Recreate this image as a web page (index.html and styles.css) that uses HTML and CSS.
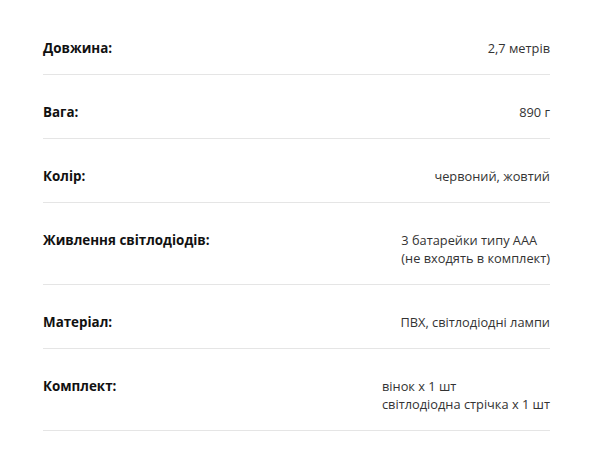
FILE: index.html
```html
<!DOCTYPE html>
<html lang="uk">
<head>
<meta charset="utf-8">
<link rel="stylesheet" href="styles.css">
</head>
<body>
<div class="specs">
  <div class="row"><div class="label">Довжина:</div><div class="value">2,7 метрів</div></div>
  <div class="row"><div class="label">Вага:</div><div class="value">890 г</div></div>
  <div class="row"><div class="label">Колір:</div><div class="value">червоний, жовтий</div></div>
  <div class="row"><div class="label">Живлення світлодіодів:</div><div class="value">3 батарейки типу ААА<br>(не входять в комплект)</div></div>
  <div class="row"><div class="label">Матеріал:</div><div class="value">ПВХ, світлодіодні лампи</div></div>
  <div class="row"><div class="label">Комплект:</div><div class="value">вінок х 1 шт<br>світлодіодна стрічка х 1 шт</div></div>
</div>
</body>
</html>
```
FILE: styles.css
```css
html, body {
  margin: 0;
  padding: 0;
  background: #fff;
}
body {
  font-family: "Open Sans", "DejaVu Sans", sans-serif;
}
.specs {
  width: 507px;
  margin-left: 43px;
  padding-top: 11px;
}
.row {
  display: flex;
  justify-content: space-between;
  align-items: flex-start;
  padding: 28px 0 17px;
  border-bottom: 1px solid #e5e5e5;
  line-height: 18px;
}
.label {
  font-size: 13.4px;
  font-weight: 700;
  color: #111;
}
.value {
  font-size: 12.8px;
  color: #333;
  text-align: left;
}
```
